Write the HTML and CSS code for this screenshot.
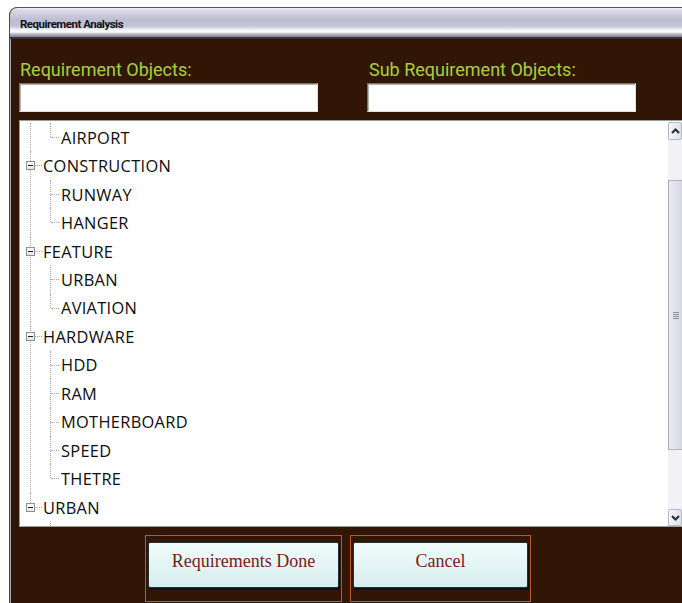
FILE: index.html
```html
<!DOCTYPE html>
<html lang="en">
<head>
<meta charset="utf-8">
<title>Requirement Analysis</title>
<link rel="stylesheet" href="styles.css">
</head>
<body>
<div class="window">
  <div class="titlebar">Requirement Analysis</div>
  <div class="client">
    <div class="fields">
      <div class="field">
        <label class="field-label" for="req">Requirement Objects:</label>
        <input class="field-input" id="req" type="text">
      </div>
      <div class="field">
        <label class="field-label" for="subreq">Sub Requirement Objects:</label>
        <input class="field-input" id="subreq" type="text">
      </div>
    </div>

    <div class="treebox">
      <div class="tree-view">
        <ul class="tree">
          <li class="root cut">
            <ul class="children">
              <li class="leaf last"><div class="row">AIRPORT</div></li>
            </ul>
          </li>
          <li class="root">
            <div class="row"><span class="toggle"></span>CONSTRUCTION</div>
            <ul class="children">
              <li class="leaf"><div class="row">RUNWAY</div></li>
              <li class="leaf last"><div class="row">HANGER</div></li>
            </ul>
          </li>
          <li class="root">
            <div class="row"><span class="toggle"></span>FEATURE</div>
            <ul class="children">
              <li class="leaf"><div class="row">URBAN</div></li>
              <li class="leaf last"><div class="row">AVIATION</div></li>
            </ul>
          </li>
          <li class="root">
            <div class="row"><span class="toggle"></span>HARDWARE</div>
            <ul class="children">
              <li class="leaf"><div class="row">HDD</div></li>
              <li class="leaf"><div class="row">RAM</div></li>
              <li class="leaf"><div class="row">MOTHERBOARD</div></li>
              <li class="leaf"><div class="row">SPEED</div></li>
              <li class="leaf last"><div class="row">THETRE</div></li>
            </ul>
          </li>
          <li class="root last">
            <div class="row"><span class="toggle"></span>URBAN</div>
            <ul class="children">
              <li class="leaf"><div class="row"></div></li>
            </ul>
          </li>
        </ul>
      </div>
      <div class="scrollbar">
        <div class="sb-btn">
          <svg width="9" height="6" viewBox="0 0 9 6"><path d="M1 5 L4.5 1.5 L8 5" fill="none" stroke="#2a2a30" stroke-width="2"/></svg>
        </div>
        <div class="sb-track sb-track-top"></div>
        <div class="sb-thumb"><span class="grip"></span></div>
        <div class="sb-track sb-track-bottom"></div>
        <div class="sb-btn">
          <svg width="9" height="6" viewBox="0 0 9 6"><path d="M1 1 L4.5 4.5 L8 1" fill="none" stroke="#2a2a30" stroke-width="2"/></svg>
        </div>
      </div>
    </div>

    <div class="actions">
      <div class="btn-frame btn-frame-done">
        <button class="btn" type="button">Requirements Done</button>
      </div>
      <div class="btn-frame btn-frame-cancel">
        <button class="btn" type="button">Cancel</button>
      </div>
    </div>
  </div>
</div>
</body>
</html>
```

FILE: styles.css
```css
html, body {
  margin: 0;
  padding: 0;
  background: #ffffff;
}

body {
  width: 682px;
  height: 603px;
  overflow: hidden;
}

/* dialog window */
.window {
  margin: 7px 0 0 9px;
  height: 596px;
  border-top: 1px solid #55555f;
  border-left: 1px solid #4a4a54;
  border-top-left-radius: 8px;
  overflow: hidden;
  display: flex;
  flex-direction: column;
  background: #321605;
}

.titlebar {
  height: 29px;
  line-height: 32px;
  padding-left: 10px;
  border-bottom: 2px solid #3b3238;
  font-family: Roboto, "Liberation Sans", sans-serif;
  font-weight: bold;
  font-size: 11.5px;
  letter-spacing: -0.5px;
  color: #111118;
  background: linear-gradient(to bottom,
    #f0f0f5 0px, #d6d6e3 3px, #bdbdd0 12px, #c3c3d4 18px,
    #f4f4f8 22px, #ffffff 24px, #b8b8c9 26px, #80808f 29px);
}

.client {
  flex: 1;
  padding-left: 9px;
  box-shadow: inset 1px 0 0 #a4a4b0;
  display: flex;
  flex-direction: column;
}

/* label + text box pairs */
.fields {
  display: grid;
  grid-template-columns: 299px 269px;
  column-gap: 49px;
  margin-top: 21px;
}

.field {
  display: flex;
  flex-direction: column;
  gap: 3px;
}

.field-label {
  display: block;
  height: 20px;
  line-height: 20px;
  padding-left: 1px;
  font-family: Roboto, "Open Sans", sans-serif;
  font-size: 18px;
  color: #a7d03c;
}

.field + .field .field-label {
  padding-left: 2px;
}

.field-input {
  box-sizing: border-box;
  height: 29px;
  margin: 0;
  padding: 0 4px;
  border: 1px solid;
  border-color: #77736b #e4e0d8 #e4e0d8 #77736b;
  box-shadow: inset 1px 1px 0 #b8b4ac;
  background: #ffffff;
  outline: none;
}

/* tree view */
.treebox {
  margin-top: 8px;
  height: 407px;
  box-sizing: border-box;
  border: 1px solid #9c9c9c;
  border-right: none;
  background: #ffffff;
  display: flex;
}

.tree-view {
  flex: 1;
  overflow: hidden;
  padding-top: 2px;
}

.tree, .children {
  list-style: none;
  margin: 0;
  padding: 0;
}

.tree {
  font-family: "Open Sans", sans-serif;
  font-size: 16.4px;
  letter-spacing: 0.3px;
  color: #0e0e0e;
}

.row {
  position: relative;
  display: flex;
  align-items: center;
  height: 28.46px;
  white-space: nowrap;
}

.root {
  position: relative;
}

/* root connector line */
.root::before {
  content: "";
  position: absolute;
  left: 10px;
  top: 0;
  bottom: 0;
  border-left: 1px dotted #a8a8a8;
}

.root.last::before {
  bottom: auto;
  height: 14px;
}

.root > .row {
  padding-left: 6px;
}

.toggle {
  position: relative;
  z-index: 1;
  box-sizing: border-box;
  width: 9px;
  height: 9px;
  margin-right: 8px;
  border: 1px solid #8f8f8f;
  background: linear-gradient(#ffffff, #e4e4e4);
}

/* minus sign */
.toggle::before {
  content: "";
  position: absolute;
  left: 1px;
  top: 3px;
  width: 5px;
  height: 1px;
  background: #202020;
}

/* horizontal connector from the box to the label */
.toggle::after {
  content: "";
  position: absolute;
  left: 8px;
  top: 3px;
  width: 7px;
  border-top: 1px dotted #a8a8a8;
}

.leaf {
  position: relative;
}

.leaf::before {
  content: "";
  position: absolute;
  left: 30px;
  top: 0;
  bottom: 0;
  border-left: 1px dotted #a8a8a8;
}

.leaf.last::before {
  bottom: auto;
  height: 14px;
}

.leaf > .row {
  padding-left: 41px;
}

.leaf > .row::before {
  content: "";
  position: absolute;
  left: 31px;
  top: 14px;
  width: 8px;
  border-top: 1px dotted #a8a8a8;
}

/* vertical scroll bar */
.scrollbar {
  width: 14px;
  margin: 1px 0 0;
  display: flex;
  flex-direction: column;
  background: #f1f1f6;
}

.sb-btn {
  box-sizing: border-box;
  height: 18px;
  display: flex;
  align-items: center;
  justify-content: center;
  border: 1px solid #b4b7c6;
  border-radius: 2px;
  background: linear-gradient(to right, #f6f6fa, #dfe0ea);
}

.sb-btn:last-child {
  height: 17px;
}

.sb-track-top {
  height: 40px;
}

.sb-track-bottom {
  flex: 1;
}

.sb-thumb {
  box-sizing: border-box;
  height: 270px;
  display: flex;
  align-items: center;
  justify-content: center;
  border: 1px solid #b0b2c0;
  border-right: none;
  border-left-color: #a4a6b4;
  background: linear-gradient(to right, #ebebf2, #d7d8e5);
}

.grip {
  width: 6px;
  height: 7px;
  background: repeating-linear-gradient(to bottom, #8e8e9c 0, #8e8e9c 1px, transparent 1px, transparent 2px);
}

/* bottom command buttons */
.actions {
  display: flex;
  gap: 8px;
  margin-top: 8px;
  padding-left: 126px;
}

.btn-frame {
  box-sizing: border-box;
  height: 67px;
  padding: 6px 2px 0;
  border: 1px solid #c0552e;
}

.btn-frame-done {
  width: 197px;
}

.btn-frame-cancel {
  width: 181px;
}

.btn {
  display: block;
  width: 100%;
  height: 46px;
  margin: 0;
  padding: 0 0 8px;
  border: 1px solid #22303a;
  border-radius: 2px;
  box-shadow: 1px 2px 0 #0d1014;
  background: linear-gradient(to bottom, #f0fbfb, #e2f4f4 60%, #d6ecec);
  font-family: "Liberation Serif", serif;
  font-size: 18px;
  color: #7a1919;
}
```
